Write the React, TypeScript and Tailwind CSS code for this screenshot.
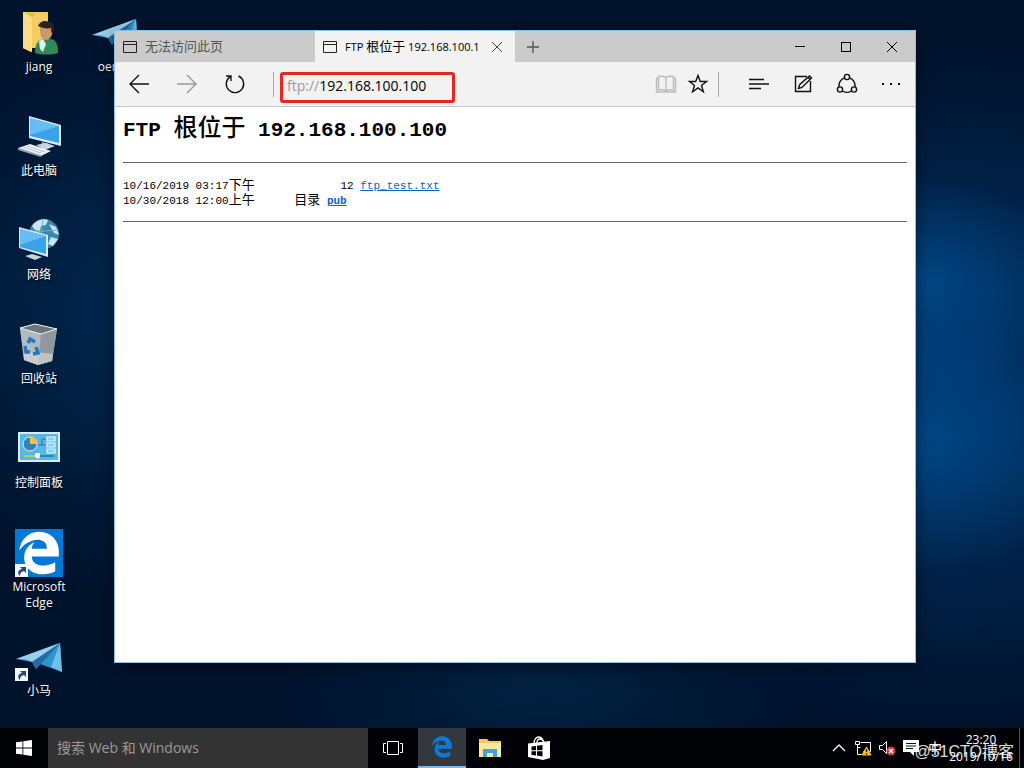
import type { ReactNode } from 'react';
import { FaEdgeLegacy } from 'react-icons/fa6';

type IconProps = { className?: string };

const UserFolderIcon = () => (
  <svg viewBox="6 0 48 48" className="size-12" aria-hidden="true">
    <path d="M14 3h25v36H14z" fill="#f3cd62" />
    <path d="M14 3l9 6v34l-9-4z" fill="#ffe9a3" />
    <path d="M23 9l3-5h-9z" fill="#e6b84c" />
    <path d="M14 3l9 5-1 35-8-4z" fill="#fbdc82" />
    <path d="M26 44c0-9 3-14 9-14h6c6 0 8 5 8 14-7 2-15 2-23 0z" fill="#2f8a5b" />
    <path d="M30 32l4-2 3 5-3 8-3-3z" fill="#dff0ea" />
    <path d="M31 20c0-5 3-7 7-7 5 0 7 4 6 9-1 6-4 9-7 9-4 0-6-4-6-11z" fill="#c99769" />
    <path d="M29 17c2-5 7-6 11-4 5 1 6 6 4 12-2-1-2-4-2-6-4 1-9 0-13-2z" fill="#2c211d" />
  </svg>
);

const ShortcutBadge = () => (
  <g>
    <path d="M0 35h13v13H0z" fill="#f4f7fb" />
    <path d="M5 38h6v6l-2-2c-3 1-4 2-4 5-3-3-2-6 2-7z" fill="#26497f" />
  </g>
);

const PlaneIcon = ({ shortcut = false }: { shortcut?: boolean }) => (
  <svg viewBox="0 0 48 48" className="size-12" aria-hidden="true">
    <path d="M1 26L45 10 21 36l-4-7z" fill="#4c9fd0" />
    <path d="M1 26c6-1 12 0 16 3L45 10z" fill="#9ccfeb" />
    <path d="M45 10L17 29l4 7z" fill="#1f6fa6" />
    <path d="M45 10L25 31l22 8z" fill="#2f93cf" />
    <path d="M45 10L21 36l5-6z" fill="#0d4c7d" />
    <path d="M45 10L36 34l11 5z" fill="#6fc0e8" />
    {shortcut && <ShortcutBadge />}
  </svg>
);

const ComputerIcon = () => (
  <svg viewBox="0 0 48 48" className="size-12" aria-hidden="true">
    <path d="M14 3l32 9v21l-32-8z" fill="#d9ecf7" />
    <path d="M15 5l29 8v17l-29-7z" fill="#3aa2ea" />
    <path d="M15 5l29 8-29 9z" fill="#68bdf5" />
    <path d="M27 29l7 2v3l-8-1z" fill="#aab7c0" />
    <path d="M21 32l10-2 9 3-10 4z" fill="#cbd3da" />
    <path d="M3 35l12-4 21 7-10 5z" fill="#edf2f6" />
    <path d="M3 35l23 7v2L3 37z" fill="#96a5b2" />
    <path d="M8 34l18 6M12 33l18 6" stroke="#b8c3cc" />
  </svg>
);

const NetworkIcon = () => (
  <svg viewBox="0 3 48 48" className="size-12" aria-hidden="true">
    <circle cx="29" cy="20" r="15" fill="#3a87ac" />
    <path d="M17 12c4-6 11-8 16-6l-2 5-5 1-1 5-5-1zM34 10l7 3 3 8-5-2zM36 23l7 2-5 7-5-2z" fill="#cae5ef" />
    <path d="M28 6l-3 27M15 18l28-2" stroke="#6ab1cc" />
    <path d="M4 13l29 8v22L4 34z" fill="#d5e8f3" />
    <path d="M5 15l26 7v18L5 33z" fill="#3aa2ea" />
    <path d="M5 15l26 7L5 31z" fill="#68bdf5" />
    <path d="M10 42l7-2 10 3-7 3z" fill="#cbd3da" />
  </svg>
);

const RecycleBinIcon = () => (
  <svg viewBox="0 0 48 48" className="size-12" aria-hidden="true">
    <path d="M5 7l15-4 22 5-5 32-14 4-14-5z" fill="#9ca5ab" />
    <path d="M5 7l21 6-3 31-14-5z" fill="#b3babf" />
    <path d="M26 13l16-5-5 32-14 4z" fill="#8f989e" />
    <path d="M5 7l15-4 22 5-16 5z" fill="#6b757b" stroke="#eef2f4" />
    <path d="M9 33l12-2 17 2-1 7-14 4-14-5z" fill="#d3d6d4" opacity=".7" />
    <g fill="none" stroke="#1e78c8" strokeWidth="3.4">
      <path d="M13 22l2-4 5 3M10 25l1 6h4M18 33l5-1-2-6" />
    </g>
  </svg>
);

const ControlPanelIcon = () => (
  <svg viewBox="0 0 48 48" className="size-12" aria-hidden="true">
    <path d="M3 7h42v30H3z" fill="#d2f0fb" />
    <path d="M5 9h38v26H5z" fill="#55b8e7" />
    <circle cx="15" cy="19" r="7" fill="#3383bb" stroke="#d9f2fb" />
    <path d="M15 19v-8a8 8 0 0 1 7 8z" fill="#f6bf3d" />
    <g fill="#86d0ef" stroke="#e6f8fd" strokeWidth="1.2">
      <path d="M32 12h8v4h-8zM32 18h8v4h-8zM32 24h8v4h-8z" />
    </g>
    <path d="M23 20h4v-6h4M27 20h4" stroke="#2676ad" fill="none" />
    <path d="M9 31h12" stroke="#f6bf3d" strokeWidth="1.6" />
    <path d="M24 31h15" stroke="#2676ad" strokeWidth="1.6" />
    <path d="M20 28h5v4l-2 2-3-2z" fill="#e6f8fd" />
  </svg>
);

const EdgeTileIcon = () => (
  <span className="relative flex size-12 items-center justify-center bg-[#0078d7] text-white">
    <FaEdgeLegacy className="size-11" aria-hidden="true" />
    <svg viewBox="0 0 48 48" className="absolute inset-0 size-12" aria-hidden="true">
      <ShortcutBadge />
    </svg>
  </span>
);

const PageIcon = () => (
  <svg viewBox="0 0 14 12" className="h-3 w-3.5 shrink-0" fill="none" stroke="#222" aria-hidden="true">
    <path d="M.5.5h13v11H.5zM.5 3.5h13" />
  </svg>
);

const CrossIcon = () => (
  <svg viewBox="0 0 12 12" className="size-3" fill="none" stroke="currentColor" aria-hidden="true">
    <path d="M1 1l10 10M11 1L1 11" />
  </svg>
);

const StrokeIcon = ({ children, className = 'size-6' }: IconProps & { children: ReactNode }) => (
  <svg viewBox="0 0 24 24" className={className} fill="none" stroke="currentColor" strokeWidth="1.4" aria-hidden="true">
    {children}
  </svg>
);

const desktopItems = [
  { label: 'jiang', icon: <UserFolderIcon /> },
  { label: '此电脑', icon: <ComputerIcon /> },
  { label: '网络', icon: <NetworkIcon /> },
  { label: '回收站', icon: <RecycleBinIcon /> },
  { label: '控制面板', icon: <ControlPanelIcon /> },
  { label: 'Microsoft Edge', icon: <EdgeTileIcon /> },
  { label: '小马', icon: <PlaneIcon shortcut /> },
];

const DesktopItem = ({ label, icon }: { label: string; icon: ReactNode }) => (
  <button
    type="button"
    className="flex h-[104px] w-[76px] shrink-0 flex-col items-center gap-0.5 px-1 text-xs leading-4 text-white [text-shadow:1px_1px_2px_#000]"
  >
    {icon}
    <span>{label}</span>
  </button>
);

const TitleBar = () => (
  <div className="flex h-[31px] shrink-0 bg-[#cbcbcb]">
    <div role="tablist" className="flex">
      <button type="button" role="tab" aria-selected="false" className="flex w-[200px] items-center gap-2 px-2 text-[13px] text-[#555]">
        <PageIcon />
        无法访问此页
      </button>
      <div className="flex w-[200px] items-center bg-[#f2f2f2] pl-2">
        <button type="button" role="tab" aria-selected="true" className="flex min-w-0 flex-1 items-center gap-2 text-black">
          <PageIcon />
          <span className="overflow-hidden text-[11px] whitespace-nowrap">
            FTP <span className="text-[13px]">根位于</span> 192.168.100.1
          </span>
        </button>
        <button type="button" aria-label="关闭标签页" className="flex w-9 justify-center text-[#444]">
          <CrossIcon />
        </button>
      </div>
    </div>
    <button type="button" aria-label="新建标签页" className="flex w-9 items-center justify-center text-[#555]">
      <svg viewBox="0 0 12 12" className="size-3" fill="none" stroke="currentColor" strokeWidth="1.4" aria-hidden="true">
        <path d="M6 0v12M0 6h12" />
      </svg>
    </button>
    <div className="ml-auto flex text-black">
      <button type="button" aria-label="最小化" className="flex w-[46px] items-center justify-center">
        <span className="h-px w-2.5 bg-black" />
      </button>
      <button type="button" aria-label="最大化" className="flex w-[46px] items-center justify-center">
        <span className="size-2.5 border border-black" />
      </button>
      <button type="button" aria-label="关闭" className="flex w-[46px] items-center justify-center">
        <CrossIcon />
      </button>
    </div>
  </div>
);

const ToolButton = ({ label, className = 'w-11', children }: IconProps & { label: string; children: ReactNode }) => (
  <button type="button" aria-label={label} className={`flex h-full shrink-0 items-center justify-center ${className}`}>
    {children}
  </button>
);

const ToolBar = () => (
  <div className="flex h-[45px] shrink-0 items-center border-b border-[#c8c8c8] bg-[#f2f2f2] text-[#111]">
    <ToolButton label="后退" className="w-12">
      <StrokeIcon>
        <path d="M22 12H3M12 3l-9 9 9 9" />
      </StrokeIcon>
    </ToolButton>
    <ToolButton label="前进" className="w-12 text-[#999]">
      <StrokeIcon>
        <path d="M2 12h19M12 3l9 9-9 9" />
      </StrokeIcon>
    </ToolButton>
    <ToolButton label="刷新" className="w-12">
      <StrokeIcon>
        <path d="M15.500 4A8.700 8.700 0 1 1 7 4.800M3 4h5v5" />
      </StrokeIcon>
    </ToolButton>
    <span className="ml-3.5 h-[25px] w-px bg-[#aaa]" />
    <form className="mt-1.5 ml-1.5 flex-1" onSubmit={(e) => e.preventDefault()}>
      <div className="flex h-[31px] w-[175px] items-center rounded-[3px] border-3 border-[#e4281f] pb-0.5 pl-1 text-sm">
        <label htmlFor="address" className="text-[#999]">
          ftp://
        </label>
        <input
          id="address"
          defaultValue="192.168.100.100"
          spellCheck={false}
          className="min-w-0 flex-1 bg-transparent text-black outline-none"
        />
      </div>
    </form>
    <ToolButton label="阅读视图" className="w-8 text-[#bbb]">
      <StrokeIcon>
        <path d="M12 5v14M12 5.500C10 4 7 4 4.500 4.500v13.500C7 17.500 10 17.500 12 19c2-1.500 5-1.500 7.500-1V4.500C17 4 14 4 12 5.500M4.500 6.500h-2V20h19V6.500h-2" />
      </StrokeIcon>
    </ToolButton>
    <ToolButton label="收藏" className="w-8">
      <StrokeIcon>
        <path d="M12 3.500l2.300 6h6.200l-5 3.900 1.900 6.300-5.400-3.800-5.400 3.800 1.900-6.300-5-3.900h6.200z" />
      </StrokeIcon>
    </ToolButton>
    <span className="mr-1.5 ml-1 h-[25px] w-px bg-[#aaa]" />
    <div className="ml-3 flex h-full pr-0.5">
      <ToolButton label="中心">
        <StrokeIcon>
          <path d="M2 7.500h15M2 12h20M2 16.500h12" />
        </StrokeIcon>
      </ToolButton>
      <ToolButton label="做笔记">
        <StrokeIcon>
          <path d="M16 4.500H4.500v15h15V9M7.500 16.500l1.300-4L18.500 4l2 2-9.500 9.500zM17 5.500l2 2" />
        </StrokeIcon>
      </ToolButton>
      <ToolButton label="共享">
        <StrokeIcon>
          <circle cx="12" cy="5" r="2.600" />
          <circle cx="5" cy="17.500" r="2.600" />
          <circle cx="19" cy="17.500" r="2.600" />
          <path d="M9.500 5.800A8.500 8.500 0 0 0 4 15M14.500 5.800A8.500 8.500 0 0 1 20 15M7.500 19a8.500 8.500 0 0 0 9 0" />
        </StrokeIcon>
      </ToolButton>
      <ToolButton label="更多">
        <svg viewBox="0 0 24 24" className="size-6" fill="currentColor" aria-hidden="true">
          <path d="M3 11h2v2H3zM11 11h2v2h-2zM19 11h2v2h-2z" />
        </svg>
      </ToolButton>
    </div>
  </div>
);

const FtpListing = () => (
  <main className="flex-1 overflow-hidden bg-white p-2 font-['Liberation_Mono','Noto_Sans_CJK_SC',monospace] text-black">
    <h1 className="pt-0.5 text-[21px] leading-7 font-bold">
      FTP <span className="text-2xl leading-none font-medium">根位于</span> 192.168.100.100
    </h1>
    <hr className="mt-[17px] border-[#666]" />
    <pre className="mt-4 font-[inherit] text-[11px] leading-[15px]">
      10/16/2019 03:17<span className="text-[13px] leading-none">下午</span>
      {'             12 '}
      <a href="#ftp_test.txt" className="text-[#0066cc] underline">ftp_test.txt</a>
      {'\n'}
      10/30/2018 12:00<span className="text-[13px] leading-none">上午</span>
      {'      '}
      <span className="text-[13px] leading-none">目录</span>{' '}
      <a href="#pub" className="font-bold text-[#0066cc] underline">pub</a>
    </pre>
    <hr className="mt-3 border-[#666]" />
  </main>
);

const Tray = () => (
  <div className="relative ml-auto flex items-center text-white">
    <button type="button" aria-label="显示隐藏的图标" className="flex w-6 justify-center">
      <svg viewBox="0 0 14 8" className="h-2 w-3.5" fill="none" stroke="currentColor" strokeWidth="1.3" aria-hidden="true">
        <path d="M1 7l6-6 6 6" />
      </svg>
    </button>
    <button type="button" aria-label="网络" className="flex w-6 justify-center">
      <svg viewBox="0 0 18 16" className="h-4 w-[18px]" fill="none" stroke="currentColor" aria-hidden="true">
        <path d="M6.500 2.500h10v9h-7M1.500 1.500h4v3h-4zM3.500 5v9.500h4M3.500 7.500h3" />
        <path d="M12.500 7l4.500 8H8z" fill="#f9bd22" stroke="#f9bd22" />
        <path d="M12.500 9v3M12.500 13v1.500" stroke="#222" strokeWidth="1.300" />
      </svg>
    </button>
    <button type="button" aria-label="音量" className="flex w-6 justify-center">
      <svg viewBox="0 0 18 16" className="h-4 w-[18px]" fill="none" stroke="currentColor" aria-hidden="true">
        <path d="M1.500 5.500h3l4-4v12l-4-4h-3z" />
        <circle cx="13" cy="11" r="4.500" fill="#d8343b" stroke="none" />
        <path d="M11 9l4 4M15 9l-4 4" strokeWidth="1.400" />
      </svg>
    </button>
    <button type="button" aria-label="通知" className="flex w-6 justify-center">
      <svg viewBox="0 0 16 16" className="size-4" aria-hidden="true">
        <path d="M0 0h16v12h-5v4l-4-4H0z" fill="#fff" />
        <path d="M3 3.500h10M3 6h10M3 8.500h7" stroke="#111" />
      </svg>
    </button>
    <span className="w-6 text-center text-sm">中</span>
    <div className="flex w-[68px] flex-col items-center text-xs leading-[17px]">
      <time>23:20</time>
      <time>2019/10/16</time>
    </div>
    <span className="mr-1 ml-1 h-10 w-px bg-[#555]" />
    <span className="pointer-events-none absolute right-2.5 bottom-1 font-['Liberation_Sans','Noto_Sans_CJK_SC',sans-serif] text-base leading-6 whitespace-nowrap text-white/85">
      @51CTO博客
    </span>
  </div>
);

const TaskBar = () => (
  <footer className="flex h-10 shrink-0 bg-[#010205]">
    <button type="button" aria-label="开始" className="flex w-12 items-center justify-center">
      <svg viewBox="0 0 16 16" className="size-4" fill="#fff" aria-hidden="true">
        <path d="M0 2.300L6.500 1.400v6.100H0zM7.300 1.300L16 0v7.500H7.300zM0 8.400h6.500v6.200L0 13.700zM7.300 8.400H16V16l-8.700-1.300z" />
      </svg>
    </button>
    <input
      type="search"
      aria-label="搜索"
      placeholder="搜索 Web 和 Windows"
      className="w-80 min-w-0 bg-[#333] px-[9px] text-sm text-white placeholder:text-[#9a9a9a]"
    />
    <button type="button" aria-label="任务视图" className="flex w-[50px] items-center justify-center">
      <svg viewBox="0 0 20 14" className="h-3.5 w-5" fill="none" stroke="#fff" aria-hidden="true">
        <path d="M4.500.5h11v13h-11zM3 2.500H.5v9H3M17 2.500h2.500v9H17" />
      </svg>
    </button>
    <button type="button" aria-label="Microsoft Edge" className="flex w-12 items-center justify-center border-b-2 border-[#76b9ed] bg-[#33383e] text-[#0a7bd8]">
      <FaEdgeLegacy className="size-[22px]" aria-hidden="true" />
    </button>
    <button type="button" aria-label="文件资源管理器" className="flex w-12 items-center justify-center">
      <svg viewBox="0 0 22 18" className="h-[18px] w-[22px]" aria-hidden="true">
        <path d="M0 0h8l2 2h12v16H0z" fill="#f5c858" />
        <path d="M0 4h22v14H0z" fill="#ffe79c" />
        <path d="M4 18v-8h14v8h-4v-4H8v4z" fill="#35a7dd" />
      </svg>
    </button>
    <button type="button" aria-label="应用商店" className="flex w-[50px] items-center justify-center">
      <svg viewBox="0 0 22 24" className="h-6 w-[22px]" aria-hidden="true">
        <path d="M6 7c0-3 2-6 4.500-6S15 3 15 5M9 7c0-3 1-4 3-4s3 1 4 3" fill="none" stroke="#fff" strokeWidth="1.300" />
        <path d="M0 7.500L22 5v17l-7 2-15-3z" fill="#fff" />
        <path d="M3.500 10.500l4.500-.6v4.300H3.500zM9 9.800l5.500-.8v5.200H9zM3.500 15.200H8v4.300l-4.500-.6zM9 15.200h5.500v5.200L9 19.600z" fill="#000" />
      </svg>
    </button>
    <Tray />
  </footer>
);

const App = () => {
  return (
    <div className="flex h-screen flex-col overflow-hidden bg-[#00132d] font-['Open_Sans','Noto_Sans_CJK_SC',sans-serif]">
      <div className="relative flex min-h-0 flex-1 bg-[radial-gradient(ellipse_170px_110px_at_89%_39%,rgba(0,84,155,0.7)_0%,transparent_100%),radial-gradient(ellipse_190px_130px_at_89%_61%,rgba(0,84,155,0.65)_0%,transparent_100%),radial-gradient(ellipse_400px_340px_at_92%_53%,#003468_0%,transparent_100%),radial-gradient(ellipse_260px_280px_at_14%_43%,#002850_0%,transparent_100%),radial-gradient(ellipse_260px_120px_at_53%_94%,#002242_0%,transparent_100%)] pt-[9px] pl-px">
        <div className="flex flex-col">
          {desktopItems.map((item) => (
            <DesktopItem key={item.label} label={item.label} icon={item.icon} />
          ))}
        </div>
        <div>
          <DesktopItem label="oem…" icon={<PlaneIcon />} />
        </div>

        <section
          aria-label="Microsoft Edge"
          className="absolute top-[30px] right-[108px] bottom-[65px] left-[114px] flex flex-col border border-[#8fc1e6] shadow-[0_4px_14px_rgba(0,0,0,0.5)]"
        >
          <TitleBar />
          <ToolBar />
          <FtpListing />
        </section>
      </div>
      <TaskBar />
    </div>
  );
};

export default App;
